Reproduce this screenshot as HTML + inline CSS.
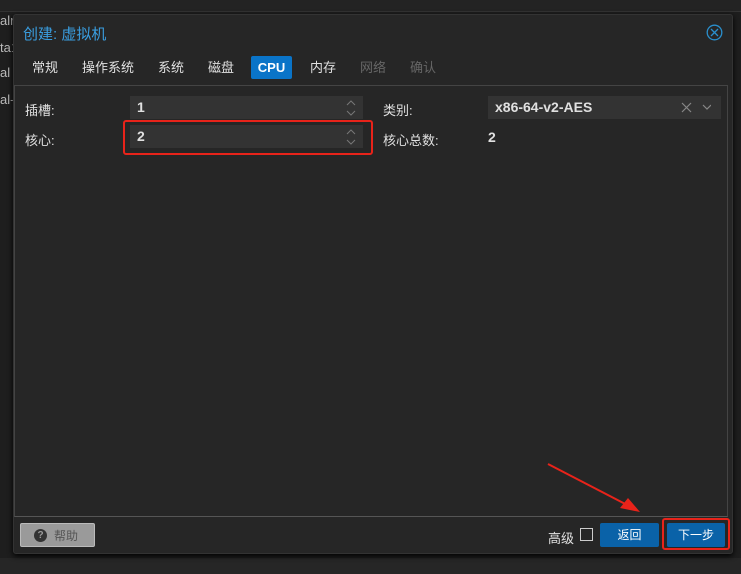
<!DOCTYPE html>
<html><head><meta charset="utf-8"><style>
*{box-sizing:border-box;margin:0;padding:0}
body{width:741px;height:574px;background:#1e1e1e;font-family:"Liberation Sans","Noto Sans CJK SC",sans-serif;font-size:13px;color:#e0e0e0;position:relative;overflow:hidden}
.a{position:absolute}
.bg1{left:0;top:0;width:741px;height:12px;background:#232323;border-bottom:1px solid #333}
.side{left:0;color:#bbb;font-size:13px}
.dlg{left:13px;top:14px;width:720px;height:540px;background:#262626;border:1px solid #333;border-radius:3px;box-shadow:0 2px 6px #000}
.tab{top:56px;height:23px;line-height:23px;padding:0 7px;font-size:13px;color:#e0e0e0}
.inp{background:#333;height:23px;line-height:23px;padding-left:7px;font-size:14px;font-weight:bold}
.btn{height:24px;line-height:24px;text-align:center;color:#fff;background:#0a62a8;font-size:12px;border-radius:2px}
</style></head><body>
<div class="a bg1"></div>
<div class="a side" style="top:13px">alr</div>
<div class="a side" style="top:40px">ta1</div>
<div class="a side" style="top:65px">al</div>
<div class="a side" style="top:92px">al-</div>
<div class="a" style="left:0;top:558px;width:741px;height:16px;background:#262626"></div>
<div class="a dlg"></div>
<div class="a" style="left:23px;top:23px;font-size:15px;color:#3a9ee0">创建: 虚拟机</div>
<svg class="a" style="left:706px;top:24px" width="17" height="17" viewBox="0 0 17 17"><circle cx="8.5" cy="8.5" r="7.3" fill="none" stroke="#2a8fcc" stroke-width="1.3"/><path d="M5 5L12 12M12 5L5 12" stroke="#2a8fcc" stroke-width="1.3"/></svg>
<div class="a tab" style="left:25px">常规</div>
<div class="a tab" style="left:75px">操作系统</div>
<div class="a tab" style="left:151px">系统</div>
<div class="a tab" style="left:201px">磁盘</div>
<div class="a tab" style="left:251px;width:41px;background:#0a74c8;color:#fff;border-radius:2px;padding:0;text-align:center;font-weight:bold">CPU</div>
<div class="a tab" style="left:303px">内存</div>
<div class="a tab" style="left:353px;color:#666">网络</div>
<div class="a tab" style="left:403px;color:#666">确认</div>
<div class="a" style="left:14px;top:85px;width:714px;height:432px;border:1px solid #444;border-bottom-color:#555"></div>
<div class="a" style="left:25px;top:100px">插槽:</div>
<div class="a" style="left:25px;top:130px">核心:</div>
<div class="a inp" style="left:130px;top:96px;width:233px">1</div>
<div class="a inp" style="left:130px;top:125px;width:233px">2</div>
<svg class="a" style="left:345px;top:99px" width="12" height="18"><path d="M2 6L6 2L10 6M2 12L6 16L10 12" fill="none" stroke="#777" stroke-width="1"/></svg>
<svg class="a" style="left:345px;top:128px" width="12" height="18"><path d="M2 6L6 2L10 6M2 12L6 16L10 12" fill="none" stroke="#777" stroke-width="1"/></svg>
<div class="a" style="left:123px;top:120px;width:250px;height:35px;border:2px solid #e8231a;border-radius:3px"></div>
<div class="a" style="left:383px;top:100px">类别:</div>
<div class="a" style="left:383px;top:130px">核心总数:</div>
<div class="a inp" style="left:488px;top:96px;width:233px">x86-64-v2-AES</div>
<svg class="a" style="left:681px;top:102px" width="30" height="12"><path d="M1 1L10 10M10 1L1 10" stroke="#888" stroke-width="1.2"/><path d="M22 3L26 7L30 3" fill="none" stroke="#888" stroke-width="1.2"/></svg>
<div class="a" style="left:488px;top:129px;font-size:14px;font-weight:bold">2</div>
<svg class="a" style="left:540px;top:460px" width="110" height="60"><path d="M8 4L93 48" stroke="#e8231a" stroke-width="2"/><path d="M100 52L80 48L88 38Z" fill="#e8231a"/></svg>
<div class="a btn" style="left:20px;top:523px;width:75px;background:#9a9a9a;color:#555;border:1px solid #bbb"></div>
<div class="a" style="left:34px;top:529px;width:13px;height:13px;border-radius:7px;background:#333;color:#9a9a9a;font-size:10px;line-height:13px;font-weight:bold;text-align:center">?</div>
<div class="a" style="left:54px;top:527px;font-size:12px;color:#555">帮助</div>
<div class="a" style="left:548px;top:528px">高级</div>
<div class="a" style="left:580px;top:528px;width:13px;height:13px;border:1px solid #ccc"></div>
<div class="a btn" style="left:600px;top:523px;width:59px">返回</div>
<div class="a btn" style="left:667px;top:523px;width:58px">下一步</div>
<div class="a" style="left:662px;top:518px;width:68px;height:32px;border:2px solid #e8231a;border-radius:3px"></div>
</body></html>
